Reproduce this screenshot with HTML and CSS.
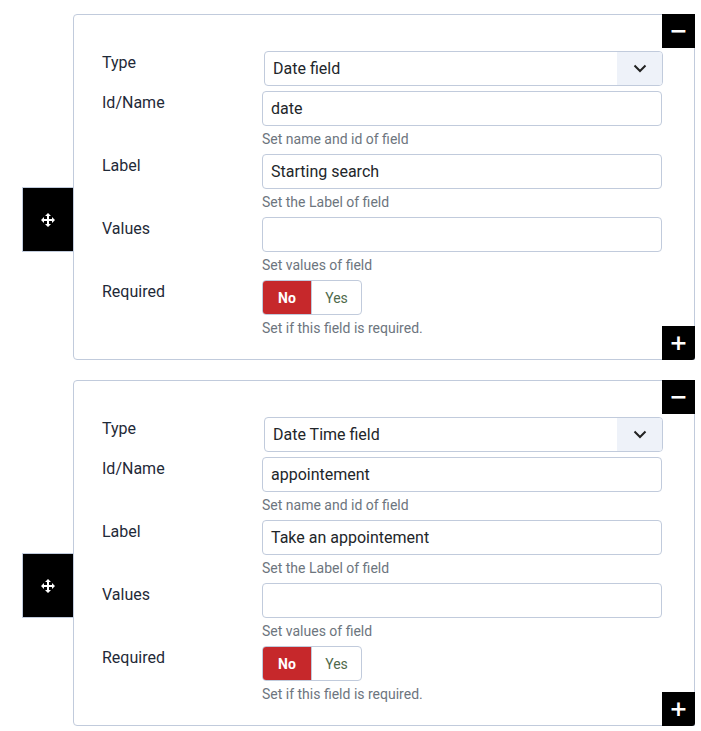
FILE: index.html
```html
<!DOCTYPE html>
<html lang="en">
<head>
    <meta charset="UTF-8" />
    <title>Form fields</title>
    <link rel="stylesheet" href="styles.css">
</head>
<body>
    <div class="fields">
        <div class="field-card">
            <div class="move-handle">
                <svg width="14" height="14" viewBox="0 0 14 14"><path d="M7 0 L10 3 L8 3 L8 6 L11 6 L11 4 L14 7 L11 10 L11 8 L8 8 L8 11 L10 11 L7 14 L4 11 L6 11 L6 8 L3 8 L3 10 L0 7 L3 4 L3 6 L6 6 L6 3 L4 3 Z" fill="#fff"/></svg>
            </div>
            <button class="card-btn btn-remove">&minus;</button>
            <div class="row row-type">
                <label>Type</label>
                <div class="field">
                    <div class="select">
                        <span>Date field</span>
                        <span class="select-arrow"><svg width="14" height="9" viewBox="0 0 14 9"><path d="M1.5 1.5 L7 7 L12.5 1.5" fill="none" stroke="#222" stroke-width="2"/></svg></span>
                    </div>
                </div>
            </div>
            <div class="row">
                <label>Id/Name</label>
                <div class="field">
                    <div class="input">date</div>
                    <div class="help">Set name and id of field</div>
                </div>
            </div>
            <div class="row">
                <label>Label</label>
                <div class="field">
                    <div class="input">Starting search</div>
                    <div class="help">Set the Label of field</div>
                </div>
            </div>
            <div class="row">
                <label>Values</label>
                <div class="field">
                    <div class="input"></div>
                    <div class="help">Set values of field</div>
                </div>
            </div>
            <div class="row">
                <label>Required</label>
                <div class="field">
                    <div class="toggle">
                        <span class="opt opt-no">No</span>
                        <span class="opt opt-yes">Yes</span>
                    </div>
                    <div class="help">Set if this field is required.</div>
                </div>
            </div>
            <button class="card-btn btn-add">+</button>
        </div>

        <div class="field-card">
            <div class="move-handle">
                <svg width="14" height="14" viewBox="0 0 14 14"><path d="M7 0 L10 3 L8 3 L8 6 L11 6 L11 4 L14 7 L11 10 L11 8 L8 8 L8 11 L10 11 L7 14 L4 11 L6 11 L6 8 L3 8 L3 10 L0 7 L3 4 L3 6 L6 6 L6 3 L4 3 Z" fill="#fff"/></svg>
            </div>
            <button class="card-btn btn-remove">&minus;</button>
            <div class="row row-type">
                <label>Type</label>
                <div class="field">
                    <div class="select">
                        <span>Date Time field</span>
                        <span class="select-arrow"><svg width="14" height="9" viewBox="0 0 14 9"><path d="M1.5 1.5 L7 7 L12.5 1.5" fill="none" stroke="#222" stroke-width="2"/></svg></span>
                    </div>
                </div>
            </div>
            <div class="row">
                <label>Id/Name</label>
                <div class="field">
                    <div class="input">appointement</div>
                    <div class="help">Set name and id of field</div>
                </div>
            </div>
            <div class="row">
                <label>Label</label>
                <div class="field">
                    <div class="input">Take an appointement</div>
                    <div class="help">Set the Label of field</div>
                </div>
            </div>
            <div class="row">
                <label>Values</label>
                <div class="field">
                    <div class="input"></div>
                    <div class="help">Set values of field</div>
                </div>
            </div>
            <div class="row">
                <label>Required</label>
                <div class="field">
                    <div class="toggle">
                        <span class="opt opt-no">No</span>
                        <span class="opt opt-yes">Yes</span>
                    </div>
                    <div class="help">Set if this field is required.</div>
                </div>
            </div>
            <button class="card-btn btn-add">+</button>
        </div>
    </div>
</body>
</html>
```

FILE: styles.css
```css
body {
    margin: 0;
    font-family: Roboto, "Liberation Sans", sans-serif;
    color: #22262a;
    background: #fff;
}
.fields {
    padding: 14px 6px 6px 73px;
    display: flex;
    flex-direction: column;
    gap: 20px;
}
.field-card {
    position: relative;
    border: 1px solid #c1cbdc;
    border-radius: 4px 0 0 4px;
    padding: 36px 32px 21px 28px;
}
.move-handle {
    position: absolute;
    left: -52px;
    top: 50%;
    width: 50px;
    height: 63px;
    background: #000;
    border: 1px solid #c1cbdc;
    border-right: none;
    display: flex;
    align-items: center;
    justify-content: center;
}
.card-btn {
    position: absolute;
    right: -1px;
    width: 33px;
    height: 34px;
    background: #000;
    color: #fff;
    border: none;
    padding: 0;
    font-family: "DejaVu Sans", sans-serif;
    font-size: 22px;
    font-weight: bold;
    line-height: 34px;
    cursor: pointer;
}
.btn-remove {
    top: -1px;
}
.btn-add {
    bottom: -1px;
    border-radius: 0 0 3px 0;
}
.row {
    display: grid;
    grid-template-columns: 160px 1fr;
    margin-bottom: 5px;
}
.row-type {
    margin-bottom: 5px;
}
.row:last-of-type {
    margin-bottom: 0;
}
.row label {
    padding-top: 1px;
    font-size: 16px;
    line-height: 22px;
    color: #1f2a38;
}
.select {
    margin-left: 2px;
    margin-right: -1px;
    height: 35px;
    box-sizing: border-box;
    border: 1px solid #c1cbdc;
    border-radius: 4px;
    display: flex;
    align-items: center;
    justify-content: space-between;
    font-size: 16px;
    padding-left: 8px;
    overflow: hidden;
}
.select-arrow {
    width: 45px;
    height: 100%;
    background: #eef2f9;
    display: flex;
    align-items: center;
    justify-content: center;
}
.input {
    height: 35px;
    box-sizing: border-box;
    border: 1px solid #c1cbdc;
    border-radius: 4px;
    font-size: 16px;
    line-height: 33px;
    padding: 0 8px;
}
.help {
    margin-top: 3px;
    font-size: 14px;
    line-height: 20px;
    color: #6d757e;
}
.toggle {
    display: inline-flex;
    height: 35px;
    box-sizing: border-box;
    border: 1px solid #c1cbdc;
    border-radius: 4px;
    overflow: hidden;
}
.opt {
    width: 48px;
    display: flex;
    align-items: center;
    justify-content: center;
    font-size: 14px;
}
.opt-no {
    background: #c6282b;
    color: #fff;
    font-weight: bold;
}
.opt-yes {
    width: 49px;
    color: #4f6a4c;
    border-left: 1px solid #c1cbdc;
}
```
